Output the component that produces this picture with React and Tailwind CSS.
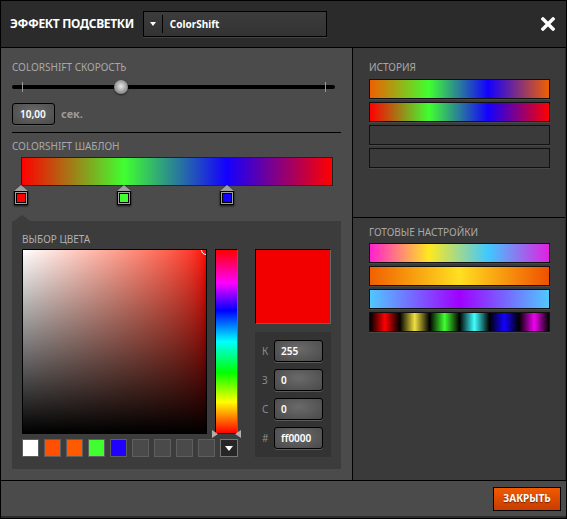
import React from "react";

const historyBars = [
  "bg-[linear-gradient(to_right,#f06000,#40ff30_33%,#1400ff_66%,#f06000)]",
  "bg-[linear-gradient(to_right,#f00,#40ff30_33%,#1400ff_66%,#f00)]",
  "bg-[#3a3a3a]",
  "bg-[#3a3a3a]",
];

const presets = [
  "bg-[linear-gradient(to_right,#ff20d0,#ffe820_33%,#40c8ff_66%,#e020e0)]",
  "bg-[linear-gradient(to_right,#f06000,#ffe020_50%,#f05000)]",
  "bg-[linear-gradient(to_right,#50c8ff,#a000ff_50%,#50c8ff)]",
  "bg-[linear-gradient(to_right,#000,#f00_8.3%,#000_16.7%,#f0e040_25%,#000_33.3%,#40ff30_41.7%,#000_50%,#40ffff_58.3%,#000_66.7%,#1400ff_75%,#000_83.3%,#f000f0_91.7%,#000)]",
];

const stops = [
  { pos: 0, color: "bg-[#f00]" },
  { pos: 33, color: "bg-[#40ff30]" },
  { pos: 66, color: "bg-[#1400ff]" },
];

const swatches = [
  "bg-white",
  "bg-[#ff5000]",
  "bg-[#ff5a00]",
  "bg-[#40ff30]",
  "bg-[#2000ff]",
  "bg-[#4a4a4a]",
  "bg-[#4a4a4a]",
  "bg-[#4a4a4a]",
  "bg-[#4a4a4a]",
];

const rgbFields = [
  { label: "К", value: "255" },
  { label: "З", value: "0" },
  { label: "С", value: "0" },
  { label: "#", value: "ff0000" },
];

const Label = ({ children }) => (
  <p className="text-[10px] leading-[12px] text-[#a8a8a8] uppercase">{children}</p>
);

const Field = ({ children, className }) => (
  <div
    className={
      "flex items-center rounded-[3px] border border-black bg-[radial-gradient(ellipse_at_50%_40%,#6a6a6a,#4a4a4a)] shadow-[0_1px_0_#5a5a5a] text-[10px] font-semibold text-white " +
      className
    }
  >
    {children}
  </div>
);

const App = () => {
  return (
    <div className="w-[567px] h-[519px] border border-black bg-[#2b2b2b] flex flex-col font-['Noto_Sans',sans-serif] select-none">
      {/* Header */}
      <div className="h-[47px] border-b border-black flex items-center pl-[9px] pr-[11px]">
        <h1 className="text-[12px] font-bold text-white tracking-[-0.35px]">ЭФФЕКТ ПОДСВЕТКИ</h1>
        <div className="ml-[9px] w-[184px] h-[26px] border border-black bg-[linear-gradient(to_bottom,#3c3c3c,#333)] shadow-[0_1px_0_#444] flex items-center">
          <span className="w-[18px] flex justify-center">
            <span className="border-x-[3px] border-x-transparent border-t-[4px] border-t-white" />
          </span>
          <span className="w-px h-[18px] bg-black" />
          <span className="ml-[7px] text-[10px] font-bold text-white">ColorShift</span>
        </div>
        <div className="ml-auto">
          <svg width="14" height="14" viewBox="0 0 14 14">
            <path d="M2 2 L12 12 M12 2 L2 12" stroke="white" strokeWidth="3.4" strokeLinecap="square" />
          </svg>
        </div>
      </div>

      {/* Body */}
      <div className="h-[433px] flex border-b border-black">
        {/* Left column */}
        <div className="w-[352px] border-r border-black bg-[#4b4b4b] pl-[11px] pr-[11px] pt-[13px]">
          <Label>ColorShift скорость</Label>

          {/* Speed slider */}
          <div className="mt-[6px] h-[16px] w-[323px] relative flex items-center">
            <div className="w-full h-[4px] rounded-full bg-black" />
            <span className="absolute left-[10px] top-[3px] w-px h-[10px] bg-[#9a9a9a]" />
            <span className="absolute left-[313px] top-[3px] w-px h-[10px] bg-[#9a9a9a]" />
            <span className="absolute left-[102px] top-[1px] w-[14px] h-[14px] rounded-full bg-[radial-gradient(circle_at_50%_45%,#e8e8e8,#9a9a9a_55%,#6a6a6a)] shadow-[0_1px_2px_rgba(0,0,0,0.6)]" />
          </div>

          <div className="mt-[8px] flex items-center">
            <Field className="w-[43px] h-[22px] pl-[7px]">10,00</Field>
            <span className="ml-[6px] text-[11px] font-bold text-[#9a9a9a]">сек.</span>
          </div>

          <div className="mt-[7px] h-px w-[329px] bg-black" />

          <div className="mt-[7px]">
            <Label>ColorShift шаблон</Label>
          </div>

          {/* Template gradient */}
          <div className="ml-[9px] mt-[5px] w-[312px]">
            <div className="h-[29px] border border-[#222] bg-[linear-gradient(to_right,#f00,#40ff30_33%,#1400ff_66%,#f00)]" />
            <div className="relative h-[20px] -mt-px">
              {stops.map((s) => (
                <div
                  key={s.pos}
                  className="absolute top-0 w-[14px] flex flex-col items-center drop-shadow-[0_1px_1px_rgba(0,0,0,0.8)]"
                  style={{ left: `calc(${s.pos}% - 7px)` }}
                >
                  <span className="border-x-[7px] border-x-transparent border-b-[6px] border-b-[#a0a0a0]" />
                  <span className="w-[14px] h-[14px] bg-[#a0a0a0] border border-black p-px">
                    <span className={"block w-full h-full border border-black " + s.color} />
                  </span>
                </div>
              ))}
            </div>
          </div>

          {/* Color picker */}
          <div className="mt-[10px]">
            <div className="ml-[2px] h-[6px] w-[16px] flex">
              <span className="border-x-[8px] border-x-transparent border-b-[6px] border-b-[#3c3c3c]" />
            </div>
            <div className="w-[329px] h-[248px] bg-[#3c3c3c] pl-[10px] pt-[12px]">
              <p className="text-[10px] leading-[12px] text-[#b0b0b0]">ВЫБОР ЦВЕТА</p>
              <div className="mt-[4px] flex gap-[17px]">
                <div className="w-[216px]">
                  <div className="flex gap-[8px]">
                    <div className="relative w-[185px] h-[185px] border border-black bg-linear-to-r from-white to-[#f00] overflow-hidden">
                      <div className="absolute inset-0 bg-linear-to-t from-black to-transparent" />
                      <span className="absolute -right-[5px] -top-[5px] w-[10px] h-[10px] rounded-full border border-white" />
                    </div>
                    <div className="relative w-[23px] h-[185px]">
                      <div className="w-full h-full border border-black border-r-[#666] bg-[linear-gradient(to_bottom,#f00,#f0f_18%,#00f_33%,#0ff_50%,#0f0_67%,#ff0_83%,#f00)]" />
                      <span className="absolute -left-[3px] bottom-[-4px] border-y-[4px] border-y-transparent border-l-[6px] border-l-[#b0b0b0]" />
                      <span className="absolute -right-[3px] bottom-[-4px] border-y-[4px] border-y-transparent border-r-[6px] border-r-[#b0b0b0]" />
                    </div>
                  </div>
                  <div className="mt-[5px] flex gap-[5px]">
                    {swatches.map((c, i) => (
                      <span key={i} className={"w-[17px] h-[18px] border border-[#5e5e5e] " + c} />
                    ))}
                    <span className="w-[18px] h-[18px] border border-[#777] bg-[#262626] flex items-center justify-center">
                      <span className="border-x-[4px] border-x-transparent border-t-[5px] border-t-white" />
                    </span>
                  </div>
                </div>

                <div className="w-[76px]">
                  <div className="h-[75px] bg-[#f20000] border border-black border-r-[#666] border-b-[#666]" />
                  <div className="mt-[8px] h-[125px] bg-[#333] pt-[8px] pl-[7px] flex flex-col gap-[7px]">
                    {rgbFields.map((f) => (
                      <div key={f.label} className="flex items-center">
                        <span className="w-[12px] text-[10px] text-[#8a8a8a]">{f.label}</span>
                        <Field className="w-[49px] h-[22px] pl-[6px]">{f.value}</Field>
                      </div>
                    ))}
                  </div>
                </div>
              </div>
            </div>
          </div>
        </div>

        {/* Right column */}
        <div className="w-[212px] bg-[#3a3a3a] flex flex-col">
          <div className="h-[170px] border-b border-black pl-[16px] pt-[13px]">
            <Label>История</Label>
            <div className="mt-[6px] flex flex-col gap-[3px]">
              {historyBars.map((b, i) => (
                <div key={i} className={"w-[181px] h-[20px] border border-[#111] shadow-[0_1px_0_#484848] " + b} />
              ))}
            </div>
          </div>
          <div className="pl-[16px] pt-[8px]">
            <Label>Готовые настройки</Label>
            <div className="mt-[5px] flex flex-col gap-[3px]">
              {presets.map((p, i) => (
                <div key={i} className={"w-[181px] h-[20px] border border-[#111] shadow-[0_1px_0_#484848] " + p} />
              ))}
            </div>
          </div>
        </div>
      </div>

      {/* Footer */}
      <div className="h-[35px] bg-[#4b4b4b] flex items-center justify-end pr-[5px]">
        <button className="w-[68px] h-[24px] border border-black bg-[linear-gradient(to_bottom,#f25a00,#c83c00)] text-[10px] font-bold text-white [text-shadow:0_1px_1px_rgba(0,0,0,0.5)]">
          ЗАКРЫТЬ
        </button>
      </div>
    </div>
  );
};

export default App;
